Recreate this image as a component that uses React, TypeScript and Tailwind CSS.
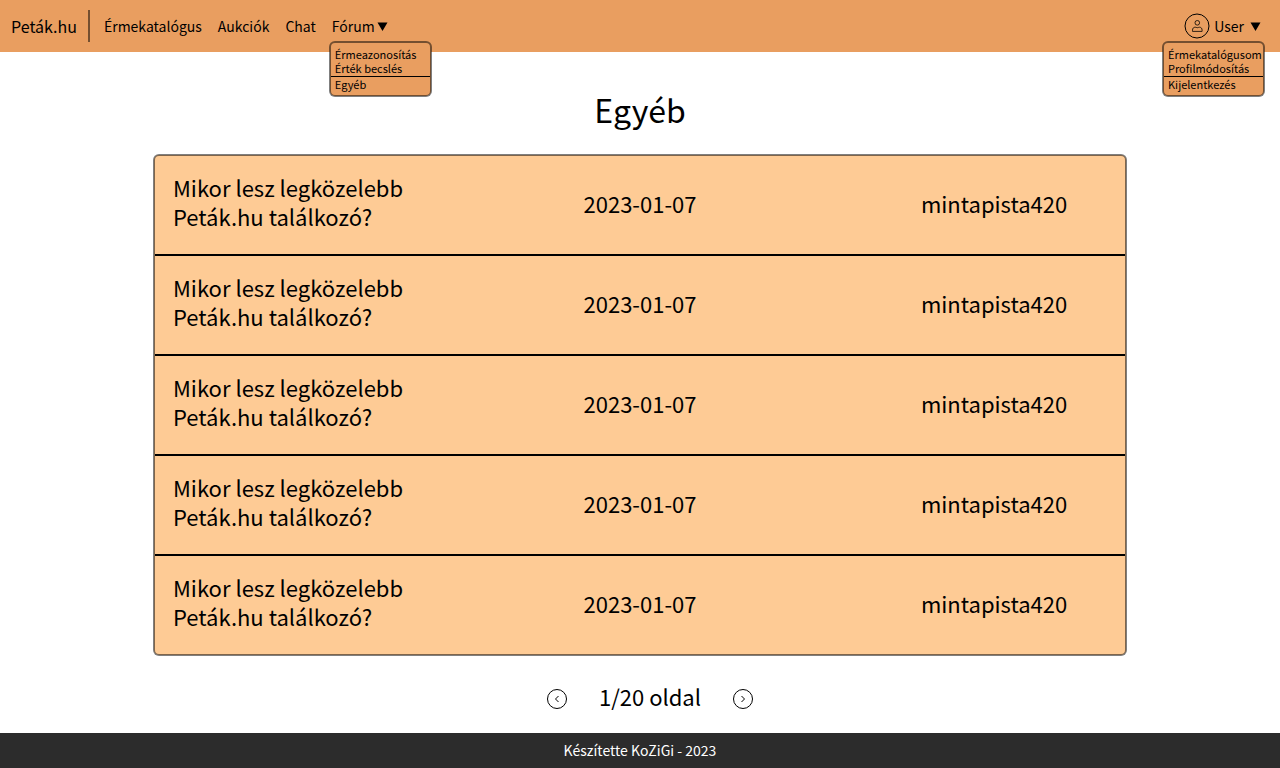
import React from 'react';

const topics = Array.from({ length: 5 }, (_, id) => ({
  id,
  title: 'Mikor lesz legközelebb Peták.hu találkozó?',
  date: '2023-01-07',
  author: 'mintapista420',
}));

function Triangle() {
  return (
    <svg width="11" height="9" viewBox="0 0 11 9" aria-hidden="true">
      <path d="M0.5 0.5h10L5.5 9z" fill="#000" />
    </svg>
  );
}

function UserIcon() {
  return (
    <svg width="26" height="26" viewBox="0 0 26 26" fill="none" stroke="#000" aria-hidden="true">
      <circle cx="13" cy="13" r="12" />
      <circle cx="13.3" cy="9.8" r="2.3" strokeWidth="0.8" />
      <path d="M8.5 18.4v-1.2c0-2 1.2-3 2.7-3 .8 0 1.2.5 2.1.5s1.3-.5 2.1-.5c1.5 0 2.7 1 2.7 3v1.2z" strokeWidth="0.8" strokeLinejoin="round" />
    </svg>
  );
}

function Menu({ items, last, className }: { items: string[]; last: string; className: string }) {
  return (
    <div
      className={`absolute z-10 w-[101px] rounded-[5px] border border-black/50 bg-[#e99e60] text-[11px] leading-[14px] ring-1 ring-black/50 ${className}`}
    >
      <ul className="px-1 pt-1 pb-px">
        {items.map((item) => (
          <li key={item}>
            <a href="#" className="block whitespace-nowrap">{item}</a>
          </li>
        ))}
      </ul>
      <a href="#" className="block border-t border-black px-1 pb-1">{last}</a>
    </div>
  );
}

function PageButton({ label, path }: { label: string; path: string }) {
  return (
    <button type="button" aria-label={label} className="mt-1">
      <svg width="22" height="22" viewBox="0 0 22 22" fill="none" stroke="#000" aria-hidden="true">
        <circle cx="11" cy="11" r="9.5" />
        <path d={path} />
      </svg>
    </button>
  );
}

export default function App() {
  return (
    <div className="flex min-h-screen flex-col bg-white font-['Noto_Sans_CJK_JP',sans-serif] text-black">
      <header className="flex h-[52px] items-center justify-between bg-[#e99e60] pr-[19px] pl-[11px] text-[14px]">
        <div className="flex items-center">
          <a href="#" className="text-[16px]">Peták.hu</a>
          <div className="mr-[14px] ml-[11px] h-8 w-[2px] bg-black/50" />
          <nav className="flex items-center gap-4">
            <a href="#">Érmekatalógus</a>
            <a href="#">Aukciók</a>
            <a href="#">Chat</a>
            <div className="relative">
              <button type="button" className="flex items-center gap-[2px]">
                Fórum
                <Triangle />
              </button>
              <Menu items={['Érmeazonosítás', 'Érték becslés']} last="Egyéb" className="top-[26px] left-[-2px]" />
            </div>
          </nav>
        </div>
        <div className="relative">
          <button type="button" className="flex items-center">
            <UserIcon />
            <span className="mr-[6px] ml-1">User</span>
            <Triangle />
          </button>
          <Menu items={['Érmekatalógusom', 'Profilmódosítás']} last="Kijelentkezés" className="top-[29px] right-[-3px]" />
        </div>
      </header>

      <main className="flex grow flex-col items-center px-6 pt-[34px] pb-4">
        <h1 className="mb-[23px] text-[32px] leading-[46px]">Egyéb</h1>
        <div className="w-full max-w-[972px] overflow-hidden rounded-[5px] border border-black/50 bg-[#fecb95] ring-1 ring-black/50">
          <table className="w-full table-fixed border-separate border-spacing-0 text-[22px] leading-[29px]">
            <colgroup>
              <col className="w-[27%]" />
              <col className="w-[46%]" />
              <col className="w-[27%]" />
            </colgroup>
            <tbody className="[&>tr:not(:last-child)>td]:border-b-2 [&>tr:last-child>td]:h-[98px]">
              {topics.map((topic) => (
                <tr key={topic.id}>
                  <td className="h-[100px] border-black pb-[6px] pl-[18px]">
                    <a href="#" className="block">{topic.title}</a>
                  </td>
                  <td className="h-[100px] border-black pb-[3px] text-center">{topic.date}</td>
                  <td className="h-[100px] border-black pb-[3px] text-center">{topic.author}</td>
                </tr>
              ))}
            </tbody>
          </table>
        </div>
        <div className="mt-[27px] flex items-end gap-[31px] pl-5 text-[22px] leading-7">
          <PageButton label="Előző oldal" path="M12.5 8l-3 3 3 3" />
          <span>1/20 oldal</span>
          <PageButton label="Következő oldal" path="M9.5 8l3 3-3 3" />
        </div>
      </main>

      <footer className="flex h-[35px] items-center justify-center bg-[#2c2c2c] text-[14px] text-white">
        Készítette KoZiGi - 2023
      </footer>
    </div>
  );
}
